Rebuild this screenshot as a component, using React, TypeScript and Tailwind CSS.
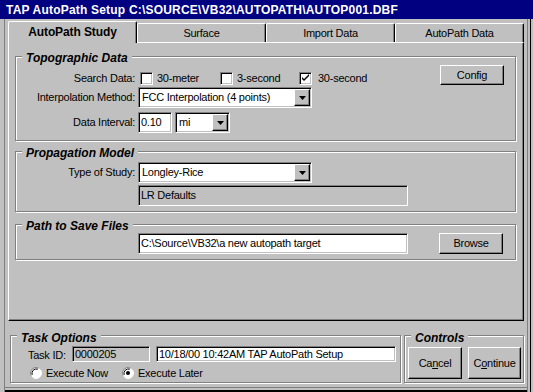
import React from "react";

const raised =
  "border border-t-white border-l-white border-r-black border-b-black shadow-[inset_-1px_-1px_0_#808080]";
const sunken =
  "border border-t-[#808080] border-l-[#808080] border-r-white border-b-white shadow-[inset_1px_1px_0_#000,inset_-1px_-1px_0_#c0c0c0]";
const etched = "border border-[#808080] shadow-[inset_1px_1px_0_#fff,1px_1px_0_#fff]";

function Group({
  label,
  className,
  labelTop,
  children,
}: {
  label: string;
  className: string;
  labelTop: string;
  children: React.ReactNode;
}) {
  return (
    <div className={`relative ${etched} ${className}`}>
      <span
        className={`absolute left-[6px] ${labelTop} bg-[#c0c0c0] px-[4px] font-bold italic text-[12px] leading-[14px] tracking-normal`}
      >
        {label}
      </span>
      {children}
    </div>
  );
}

function Check({ checked }: { checked?: boolean }) {
  return (
    <div className={`w-[13px] h-[13px] bg-white shrink-0 ${sunken} flex items-center justify-center`}>
      {checked && (
        <svg width="9" height="9" viewBox="0 0 9 9" className="block">
          <path d="M1 3 L1 5 L3 7 L8 2 L8 0 L3 5 Z" fill="#000" />
        </svg>
      )}
    </div>
  );
}

function Radio({ checked }: { checked?: boolean }) {
  return (
    <svg width="12" height="12" viewBox="0 0 12 12" className="block shrink-0">
      <circle cx="6" cy="6" r="5.5" fill="#fff" />
      <path d="M1.1 8.5 A5.5 5.5 0 0 1 8.5 1.1" stroke="#808080" strokeWidth="1" fill="none" />
      <path d="M2.2 7.8 A4.4 4.4 0 0 1 7.8 2.2" stroke="#000" strokeWidth="1" fill="none" />
      <path d="M10.9 3.5 A5.5 5.5 0 0 1 3.5 10.9" stroke="#fff" strokeWidth="1" fill="none" />
      {checked && <circle cx="6" cy="6" r="2" fill="#000" />}
    </svg>
  );
}

function Combo({ value, width }: { value: string; width: string }) {
  return (
    <div className={`${width} h-[21px] bg-white ${sunken} flex items-stretch p-[1px]`}>
      <div className="flex-1 flex items-center pl-[2px] leading-[13px] whitespace-nowrap overflow-hidden">
        {value}
      </div>
      <div className={`w-[16px] bg-[#c0c0c0] ${raised} flex items-center justify-center`}>
        <svg width="7" height="4" viewBox="0 0 7 4" className="block">
          <path d="M0 0 H7 L3.5 4 Z" fill="#000" />
        </svg>
      </div>
    </div>
  );
}

function Button({ children, className }: { children: React.ReactNode; className: string }) {
  return (
    <div className={`${raised} bg-[#c0c0c0] flex items-center justify-center leading-[13px] ${className}`}>
      {children}
    </div>
  );
}

function Tab({ label, active }: { label: string; active?: boolean }) {
  if (active) {
    return (
      <div className="relative z-10 w-[129px] h-[22px] -mb-[1px] bg-[#c0c0c0] border-t border-l border-r border-t-white border-l-white border-r-black shadow-[inset_-1px_0_0_#808080] rounded-t-[2px] flex items-center justify-center font-bold text-[12px] tracking-[-0.1px] pb-[1px]">
        {label}
      </div>
    );
  }
  return (
    <div className="w-[129px] h-[19px] bg-[#c0c0c0] border-t border-l border-r border-t-white border-l-white border-r-black shadow-[inset_-1px_0_0_#808080] rounded-t-[2px] flex items-center justify-center">
      {label}
    </div>
  );
}

export default function App() {
  return (
    <div className="w-[533px] h-[392px] bg-[#c0c0c0] flex flex-col overflow-hidden font-['Liberation_Sans',Arial,sans-serif] text-[11px] tracking-[-0.25px] text-black">
      {/* Title bar */}
      <div className="h-[19px] bg-[#000080] text-white font-bold text-[12px] tracking-[0.2px] flex items-center pl-[6px] pt-[1px] whitespace-nowrap">
        TAP AutoPath Setup C:\SOURCE\VB32\AUTOPATH\AUTOP001.DBF
      </div>

      {/* Body */}
      <div className="flex-1 flex flex-col pt-[2px] pl-[8px] pr-[9px] shadow-[inset_4px_0_0_#c0c0c0,inset_5px_0_0_#808080,inset_-2px_0_0_#c0c0c0,inset_-3px_0_0_#000,inset_-5px_0_0_#c0c0c0,inset_-6px_0_0_#808080,inset_0_-2px_0_#000,inset_0_-4px_0_#c0c0c0,inset_0_-5px_0_#808080]">
        {/* Tabs */}
        <div className="h-[21px] flex items-end">
          <Tab label="AutoPath Study" active />
          <Tab label="Surface" />
          <Tab label="Import Data" />
          <Tab label="AutoPath Data" />
        </div>

        {/* Tab panel */}
        <div className="h-[279px] border border-t-white border-l-white border-r-black border-b-black shadow-[inset_-1px_-1px_0_#808080] pt-[13px] pl-[6px] pr-[7px] flex flex-col">
          {/* Topographic Data */}
          <Group label="Topographic Data" className="pt-[8px] pb-[7px]" labelTop="top-[-6px]">
            <div className="h-[20px] flex items-start">
              <div className="flex items-center h-[13px] mt-[7px]">
                <div className="w-[119px] text-right leading-[13px]">Search Data:</div>
                <div className="w-[80px] ml-[5px] flex items-center">
                  <Check />
                  <span className="ml-[4px] leading-[13px]">30-meter</span>
                </div>
                <div className="w-[79px] flex items-center">
                  <Check />
                  <span className="ml-[4px] leading-[13px]">3-second</span>
                </div>
                <div className="flex items-center">
                  <Check checked />
                  <span className="ml-[6px] leading-[13px]">30-second</span>
                </div>
              </div>
              <Button className="ml-auto mr-[11px] w-[64px] h-[20px]">Config</Button>
            </div>
            <div className="mt-[2px] flex items-center">
              <div className="w-[119px] text-right leading-[13px]">Interpolation Method:</div>
              <div className="ml-[3px]">
                <Combo value="FCC Interpolation (4 points)" width="w-[174px]" />
              </div>
            </div>
            <div className="mt-[4px] flex items-center">
              <div className="w-[119px] text-right leading-[13px]">Data Interval:</div>
              <div className={`ml-[3px] w-[34px] h-[21px] bg-white ${sunken} flex items-center pl-[2px]`}>0.10</div>
              <div className="ml-[3px]">
                <Combo value="mi" width="w-[55px]" />
              </div>
            </div>
          </Group>

          {/* Propagation Model */}
          <Group label="Propagation Model" className="mt-[10px] pt-[10px] pb-[5px]" labelTop="top-[-6px]">
            <div className="flex items-center">
              <div className="w-[119px] text-right leading-[13px]">Type of Study:</div>
              <div className="ml-[3px]">
                <Combo value="Longley-Rice" width="w-[174px]" />
              </div>
            </div>
            <div className="mt-[2px] flex items-center">
              <div className="w-[119px]" />
              <div className={`ml-[3px] w-[270px] h-[21px] ${sunken} flex items-center pl-[2px]`}>LR Defaults</div>
            </div>
          </Group>

          {/* Path to Save Files */}
          <Group label="Path to Save Files" className="mt-[12px] pt-[8px] pb-[5px]" labelTop="top-[-6px]">
            <div className="flex items-center">
              <div className="w-[119px]" />
              <div className={`ml-[3px] w-[270px] h-[21px] bg-white ${sunken} flex items-center pl-[2px] whitespace-nowrap`}>
                C:\Source\VB32\a new autopath target
              </div>
              <Button className="ml-[31px] w-[64px] h-[21px]">Browse</Button>
            </div>
          </Group>
        </div>

        {/* Bottom groups */}
        <div className="mt-[14px] flex pl-[2px]">
          <Group label="Task Options" className="w-[391px] h-[48px] pt-[10px]" labelTop="top-[-5px]">
            <div className="flex items-center h-[16px]">
              <div className="w-[61px] pl-[17px] leading-[13px] pt-[3px]">Task ID:</div>
              <div className={`w-[78px] h-[16px] ${sunken} flex items-center pl-[2px]`}>0000205</div>
              <div className={`ml-[6px] w-[240px] h-[16px] bg-white ${sunken} flex items-center pl-[2px] whitespace-nowrap`}>
                10/18/00 10:42AM TAP AutoPath Setup
              </div>
            </div>
            <div className="mt-[5px] flex items-center pl-[19px] h-[12px]">
              <div className="w-[92px] flex items-center">
                <Radio />
                <span className="ml-[4px] leading-[13px]">Execute Now</span>
              </div>
              <div className="flex items-center">
                <Radio checked />
                <span className="ml-[4px] leading-[13px]">Execute Later</span>
              </div>
            </div>
          </Group>
          <Group label="Controls" className="ml-[3px] w-[120px] h-[48px] pt-[11px] pl-[3px]" labelTop="top-[-5px]">
            <div className="flex">
              <Button className="w-[54px] h-[32px]">
                Ca<span className="underline">n</span>cel
              </Button>
              <Button className="ml-[6px] w-[53px] h-[32px]">
                C<span className="underline">o</span>ntinue
              </Button>
            </div>
          </Group>
        </div>
      </div>
    </div>
  );
}
